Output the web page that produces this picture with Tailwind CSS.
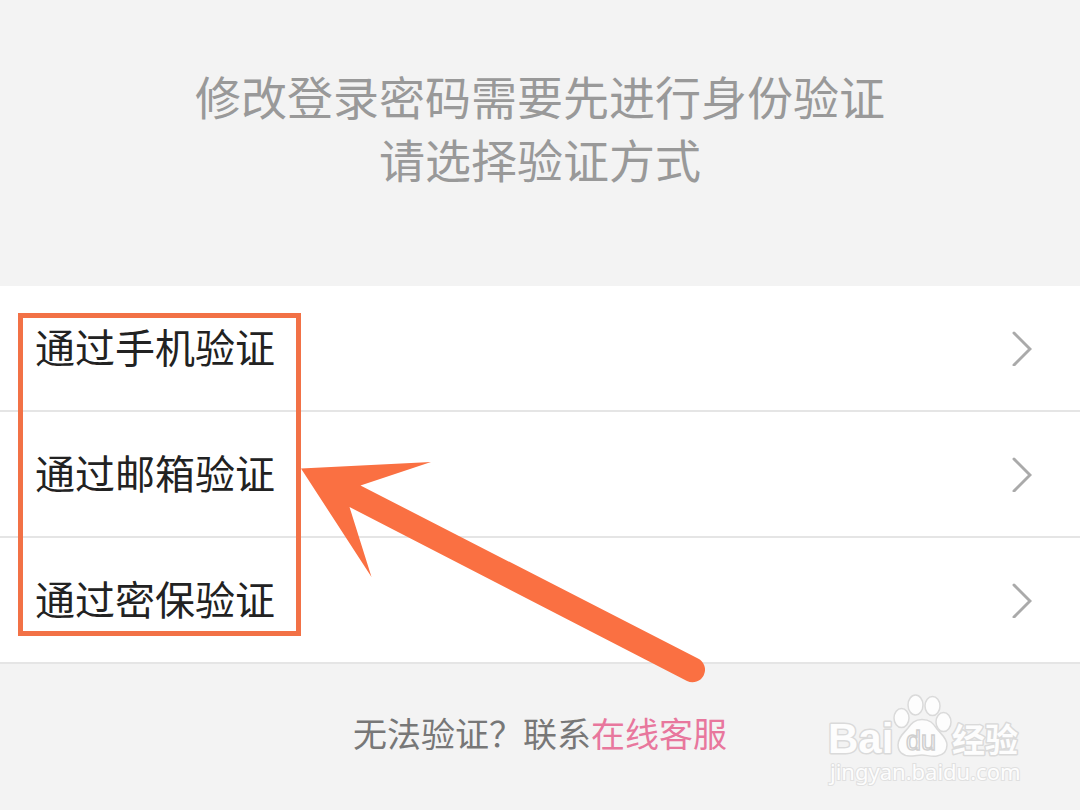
<!DOCTYPE html>
<html lang="zh-CN">
  <head>
    <meta charset="UTF-8" />
    <meta name="viewport" content="width=device-width, initial-scale=1.0" />
    <title>身份验证</title>
    <script src="https://cdn.jsdelivr.net/npm/@tailwindcss/browser@4"></script>
  </head>
  <body class="bg-[#f3f3f3] font-['Noto_Sans_CJK_SC',sans-serif]">
    <div class="relative min-h-screen overflow-hidden">
      <header class="px-8 pt-16 pb-24 text-center">
        <h1 class="text-[46px] leading-[63px] text-[#999999]">
          修改登录密码需要先进行身份验证<br />请选择验证方式
        </h1>
      </header>

      <!-- Verification methods -->
      <nav class="bg-white">
        <a
          href="#"
          class="flex h-[126px] items-center justify-between border-b-2 border-[#e5e5e5] pb-1 pl-[35px] pr-12 text-[40px] text-[#222222]"
        >
          <span>通过手机验证</span>
          <svg class="h-10 w-5" viewBox="0 0 20 40" fill="none" stroke="#aaaaaa" stroke-width="3" stroke-linecap="round">
            <path d="M2 7L18 23L2 39" />
          </svg>
        </a>
        <a
          href="#"
          class="flex h-[126px] items-center justify-between border-b-2 border-[#e5e5e5] pb-1 pl-[35px] pr-12 text-[40px] text-[#222222]"
        >
          <span>通过邮箱验证</span>
          <svg class="h-10 w-5" viewBox="0 0 20 40" fill="none" stroke="#aaaaaa" stroke-width="3" stroke-linecap="round">
            <path d="M2 7L18 23L2 39" />
          </svg>
        </a>
        <a
          href="#"
          class="flex h-[126px] items-center justify-between border-b-2 border-[#e5e5e5] pb-1 pl-[35px] pr-12 text-[40px] text-[#222222]"
        >
          <span>通过密保验证</span>
          <svg class="h-10 w-5" viewBox="0 0 20 40" fill="none" stroke="#aaaaaa" stroke-width="3" stroke-linecap="round">
            <path d="M2 7L18 23L2 39" />
          </svg>
        </a>
      </nav>

      <footer class="pt-11 text-center text-[34px] leading-[50px] text-[#777777]">
        无法验证？联系<a href="#" class="text-[#e8779d]">在线客服</a>
      </footer>

      <!-- Highlight box and arrow -->
      <div class="absolute top-[313px] left-[18px] h-[323px] w-[283px] border-5 border-[#f27146]"></div>
      <svg class="absolute top-[455px] left-[295px] h-[240px] w-[420px]" viewBox="295 455 420 240" fill="#fa7042">
        <path d="M301 468.500L431 462L360.500 485.500L698 658.500A12.500 12.500 0 0 1 687 681L349.500 507L371.500 577Z" />
      </svg>

      <!-- Watermark -->
      <svg class="absolute right-[50px] bottom-[15px] h-[110px] w-[210px]" viewBox="820 685 210 110" fill="#fdfdfd" stroke="#dadada">
        <g stroke-width="3" stroke-linejoin="round" paint-order="stroke" font-weight="bold">
          <text x="828" y="753" font-size="42" font-family="Liberation Sans, Arial, sans-serif">Bai</text>
          <text x="952" y="752" font-size="33" font-family="Noto Sans CJK SC, sans-serif">经验</text>
        </g>
        <g stroke-width="1.500">
          <ellipse cx="901.500" cy="718" rx="7.500" ry="9.500" />
          <ellipse cx="915.500" cy="705" rx="7.500" ry="10" />
          <ellipse cx="932.500" cy="706" rx="7.500" ry="9.500" />
          <ellipse cx="943.500" cy="722" rx="7.500" ry="9.500" />
          <path d="M922 719.500C914 719.500 911 724 908 728C904 733 898 737 898 745C898 752 903 756 910 756C915 756 918 755 922 755C927 755 931 757 937 756C943 755 947 751 947 745C947 738 941 734 937 729C933 723 930 719.500 922 719.500Z" />
        </g>
        <text x="906" y="750" font-size="27" font-family="Liberation Sans, Arial, sans-serif" stroke="#cfcfcf" stroke-width="1.500">du</text>
        <text x="830" y="780" font-size="22" font-family="Noto Sans, sans-serif" stroke="#e0e0e0" stroke-width="2" paint-order="stroke">jingyan.baidu.com</text>
      </svg>
    </div>
  </body>
</html>
